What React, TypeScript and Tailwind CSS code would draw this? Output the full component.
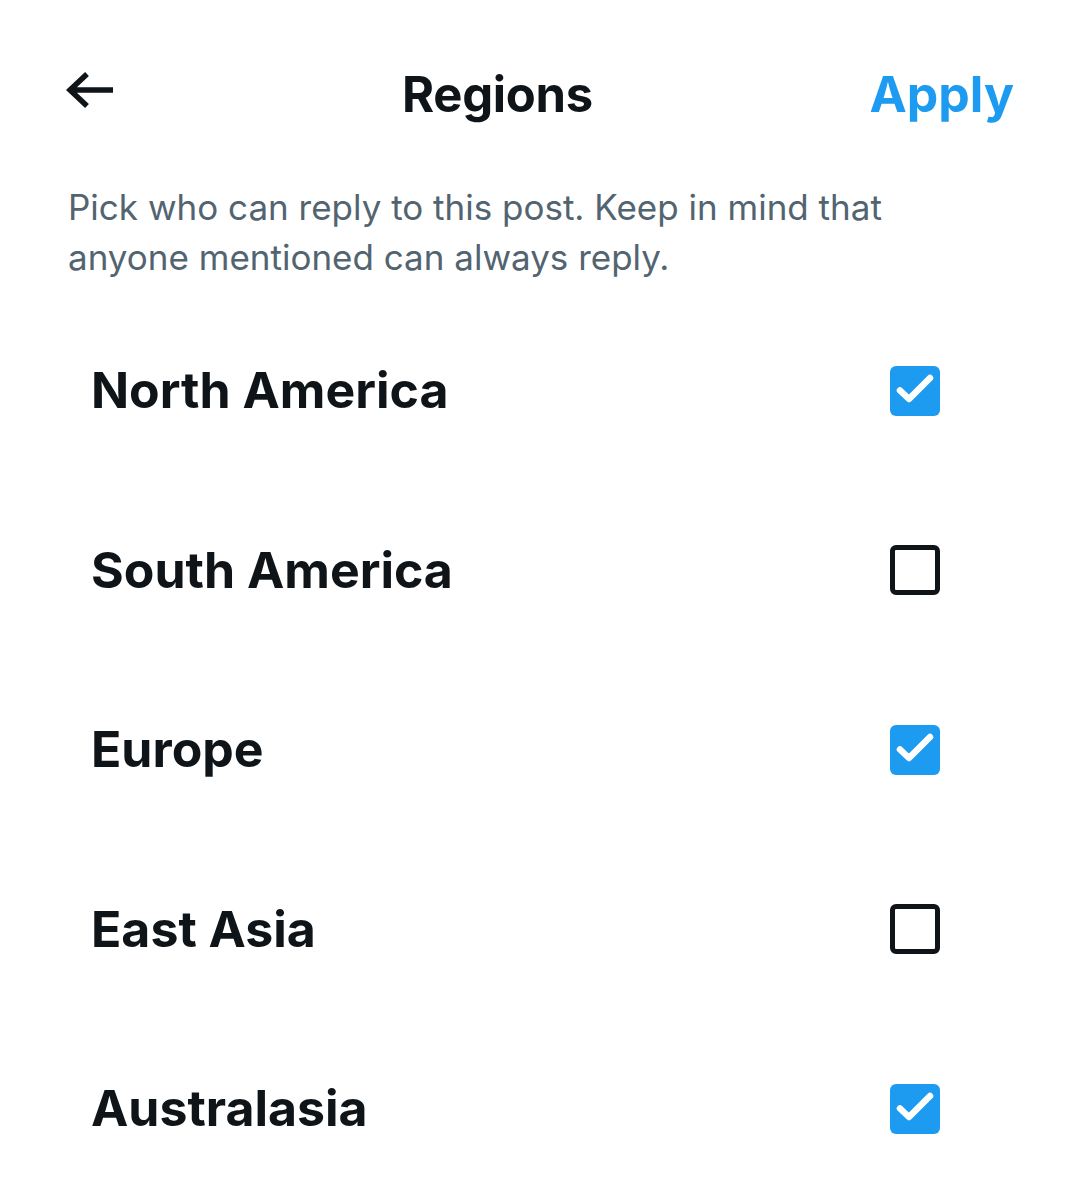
const regions = [
  { name: "North America", checked: true },
  { name: "South America", checked: false },
  { name: "Europe", checked: true },
  { name: "East Asia", checked: false },
  { name: "Australasia", checked: true },
];

const Check = ({ checked }: { checked: boolean }) =>
  checked ? (
    <div className="w-[50px] h-[50px] rounded-[6px] bg-[#1d9bf0]">
      <svg width="50" height="50" viewBox="0 0 50 50" fill="none">
        <path d="M10 24.5l9 8.5 21-21" stroke="white" strokeWidth="6.5" strokeLinecap="round" strokeLinejoin="round" />
      </svg>
    </div>
  ) : (
    <div className="w-[50px] h-[50px] rounded-[6px] border-[5px] border-[#0f1419]" />
  );

export default function App() {
  return (
    <div className="w-[1072px] h-[1200px] bg-white overflow-hidden" style={{ fontFamily: "Inter, 'Noto Sans', sans-serif" }}>
      <div className="flex items-center pl-[66px] pr-[58px] pt-[58px] h-[122px]">
        <svg width="50" height="40" viewBox="0 0 50 40" fill="none">
          <path d="M47 20H5M21 4L4 20l17 16" stroke="#0f1419" strokeWidth="5.5" />
        </svg>
        <h1 className="text-[49px] font-bold text-[#0f1419] ml-[286px] mt-[10px] tracking-[-0.3px]">Regions</h1>
        <span className="text-[50px] font-bold text-[#1d9bf0] ml-auto mt-[8px]">Apply</span>
      </div>
      <p className="px-[68px] mt-[60px] max-w-[990px] text-[35px] leading-[50px] text-[#536471]">
        Pick who can reply to this post. Keep in mind that anyone mentioned can always reply.
      </p>
      <ul className="mt-[19px]">
        {regions.map((r) => (
          <li key={r.name} className="h-[179.5px] flex items-center justify-between pl-[91px] pr-[132px]">
            <span className="text-[50px] font-bold text-[#0f1419]">{r.name}</span>
            <Check checked={r.checked} />
          </li>
        ))}
      </ul>
    </div>
  );
}
